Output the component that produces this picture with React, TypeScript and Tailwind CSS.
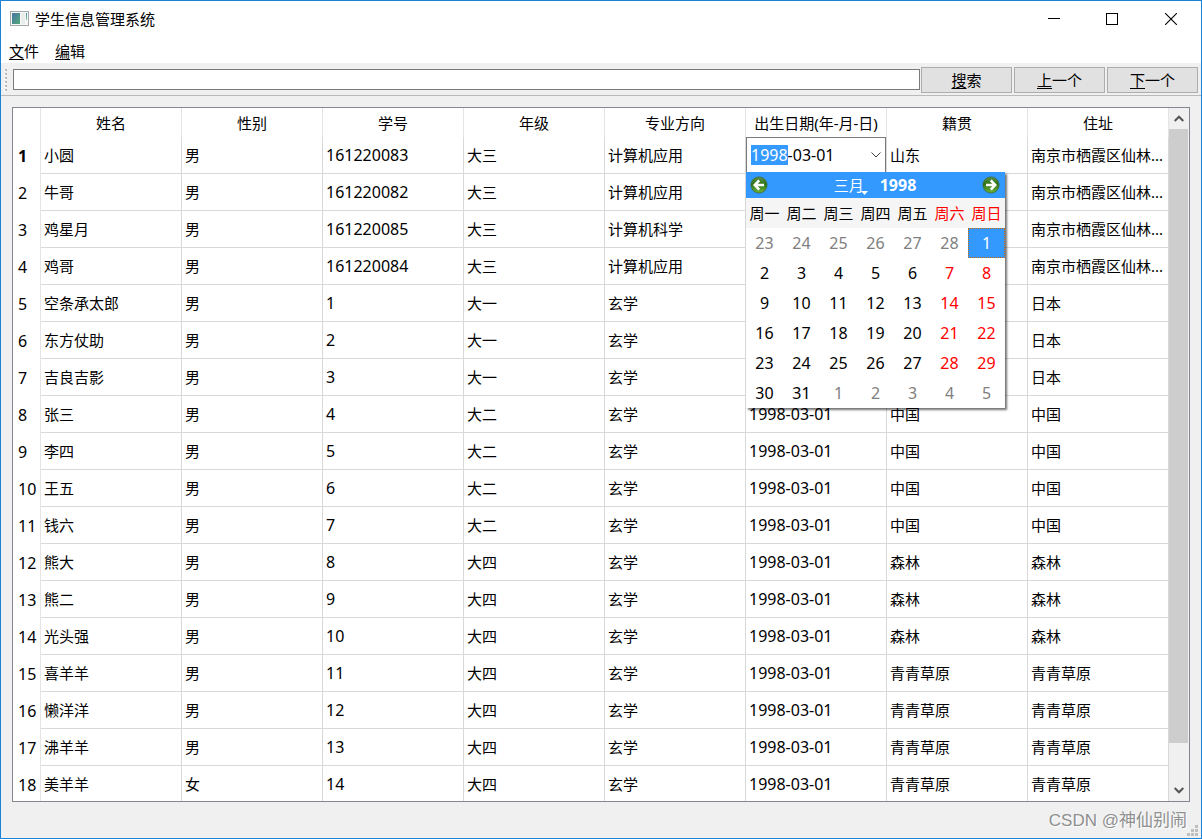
import { useEffect, useRef } from "react";
import clsx from "clsx";

type Student = [string, string, string, string, string, string, string, string];

const COLUMNS = ["姓名", "性别", "学号", "年级", "专业方向", "出生日期(年-月-日)", "籍贯", "住址"];

const BIRTHDAY = "1998-03-01";

const STUDENTS: Student[] = [
  ["小圆", "男", "161220083", "大三", "计算机应用", BIRTHDAY, "山东", "南京市栖霞区仙林..."],
  ["牛哥", "男", "161220082", "大三", "计算机应用", "", "", "南京市栖霞区仙林..."],
  ["鸡星月", "男", "161220085", "大三", "计算机科学", "", "", "南京市栖霞区仙林..."],
  ["鸡哥", "男", "161220084", "大三", "计算机应用", "", "", "南京市栖霞区仙林..."],
  ["空条承太郎", "男", "1", "大一", "玄学", "", "", "日本"],
  ["东方仗助", "男", "2", "大一", "玄学", "", "", "日本"],
  ["吉良吉影", "男", "3", "大一", "玄学", "", "", "日本"],
  ["张三", "男", "4", "大二", "玄学", BIRTHDAY, "中国", "中国"],
  ["李四", "男", "5", "大二", "玄学", BIRTHDAY, "中国", "中国"],
  ["王五", "男", "6", "大二", "玄学", BIRTHDAY, "中国", "中国"],
  ["钱六", "男", "7", "大二", "玄学", BIRTHDAY, "中国", "中国"],
  ["熊大", "男", "8", "大四", "玄学", BIRTHDAY, "森林", "森林"],
  ["熊二", "男", "9", "大四", "玄学", BIRTHDAY, "森林", "森林"],
  ["光头强", "男", "10", "大四", "玄学", BIRTHDAY, "森林", "森林"],
  ["喜羊羊", "男", "11", "大四", "玄学", BIRTHDAY, "青青草原", "青青草原"],
  ["懒洋洋", "男", "12", "大四", "玄学", BIRTHDAY, "青青草原", "青青草原"],
  ["沸羊羊", "男", "13", "大四", "玄学", BIRTHDAY, "青青草原", "青青草原"],
  ["美羊羊", "女", "14", "大四", "玄学", BIRTHDAY, "青青草原", "青青草原"],
];

const WEEKDAYS = ["周一", "周二", "周三", "周四", "周五", "周六", "周日"];

const WEEKS = [
  [23, 24, 25, 26, 27, 28, 1],
  [2, 3, 4, 5, 6, 7, 8],
  [9, 10, 11, 12, 13, 14, 15],
  [16, 17, 18, 19, 20, 21, 22],
  [23, 24, 25, 26, 27, 28, 29],
  [30, 31, 1, 2, 3, 4, 5],
];

function TitleBar() {
  return (
    <header className="flex h-9 shrink-0 items-center bg-white pl-2">
      <svg width="20" height="16" viewBox="0 0 20 16" className="ml-px" aria-hidden="true">
        <defs>
          <linearGradient id="pane" x1="0" y1="0" x2="1" y2="1">
            <stop offset="0" stopColor="#4676a4" />
            <stop offset="1" stopColor="#54a77c" />
          </linearGradient>
          <linearGradient id="strip" x1="0" y1="0" x2="0" y2="1">
            <stop offset="0" stopColor="#4a86a8" />
            <stop offset="1" stopColor="#8cc7a4" />
          </linearGradient>
        </defs>
        <rect x="0.5" y="0.5" width="18" height="14" fill="#f6f7f7" stroke="#a3a9ab" />
        <rect x="2" y="2" width="8" height="11" fill="url(#pane)" />
        <rect x="11" y="2" width="4" height="11" fill="#e9edec" />
        <rect x="16" y="2" width="1" height="7" fill="url(#strip)" />
      </svg>
      <h1 className="ml-[5px] flex-1 text-[15px]">学生信息管理系统</h1>
      <div className="flex h-full">
        <button type="button" aria-label="最小化" className="flex w-[58px] items-center justify-center">
          <svg width="12" height="12" shapeRendering="crispEdges">
            <path d="M0 5.5h12" stroke="#000" />
          </svg>
        </button>
        <button type="button" aria-label="最大化" className="flex w-[58px] items-center justify-center">
          <svg width="12" height="12" shapeRendering="crispEdges">
            <rect x="0.5" y="0.5" width="11" height="11" fill="none" stroke="#000" />
          </svg>
        </button>
        <button type="button" aria-label="关闭" className="flex w-[60px] items-center justify-center">
          <svg width="12" height="12">
            <path d="M0 0l12 12M12 0L0 12" stroke="#000" strokeWidth="1.1" />
          </svg>
        </button>
      </div>
    </header>
  );
}

function MenuBar() {
  return (
    <nav className="flex h-[27px] shrink-0 items-center gap-4 border-b border-[#f0f0f0] bg-white px-2 pt-0.5">
      <button type="button">
        <u className="underline-offset-2">文</u>件
      </button>
      <button type="button">
        <u className="underline-offset-2">编</u>辑
      </button>
    </nav>
  );
}

function ToolButton({ hotkey, rest }: { hotkey: string; rest: string }) {
  return (
    <button type="button" className="h-[26px] w-[91px] border border-[#adadad] bg-[#e1e1e1]">
      <u className="underline-offset-2">{hotkey}</u>
      {rest}
    </button>
  );
}

function ToolBar() {
  return (
    <div className="flex h-8 shrink-0 items-center border-b border-[#b9b9b9] px-[3px]">
      <svg width="9" height="24" shapeRendering="crispEdges" aria-hidden="true">
        {[1, 5, 9, 13, 17, 21].map((y) => (
          <g key={y}>
            <rect x="0" y={y + 1} width="2" height="2" fill="#fff" />
            <rect x="1" y={y} width="2" height="2" fill="#bababa" />
          </g>
        ))}
      </svg>
      <input
        type="text"
        aria-label="搜索内容"
        className="mr-px h-[21px] min-w-0 flex-1 border border-[#7a7a7a] bg-white px-1 outline-none"
      />
      <div className="flex gap-0.5">
        <ToolButton hotkey="搜" rest="索" />
        <ToolButton hotkey="上" rest="一个" />
        <ToolButton hotkey="下" rest="一个" />
      </div>
    </div>
  );
}

function MonthArrow({ label, flip }: { label: string; flip?: boolean }) {
  return (
    <button type="button" aria-label={label}>
      <svg width="18" height="18" viewBox="0 0 18 18" className={clsx("block", flip && "-scale-x-100")}>
        <defs>
          <linearGradient id="arrow" x1="0" y1="0" x2="0" y2="1">
            <stop offset="0" stopColor="#5d8f4a" />
            <stop offset="0.45" stopColor="#2f7415" />
            <stop offset="1" stopColor="#6fb53a" />
          </linearGradient>
        </defs>
        <circle cx="9" cy="9" r="8.1" fill="url(#arrow)" stroke="#3c6b3a" strokeWidth="0.8" />
        <path d="M9.2 4.4L4.8 9l4.4 4.6M5 9h9" fill="none" stroke="#fff" strokeWidth="2.6" />
      </svg>
    </button>
  );
}

function Calendar() {
  return (
    <div className="absolute top-[35px] left-0 z-10 w-[259px] bg-white shadow-[2px_2px_2px_rgba(0,0,0,0.55)]">
      <div className="flex h-[26px] items-center justify-between bg-[#3399ff] pr-[5px] pl-1 font-bold text-white">
        <MonthArrow label="上个月" />
        <div className="flex items-center gap-4">
          <button type="button" className="relative font-normal">
            三月
            <svg width="7" height="4" className="absolute -right-1 bottom-0" aria-hidden="true">
              <path d="M0 0h7L3.5 4z" fill="#fff" />
            </svg>
          </button>
          <button type="button" className="text-base leading-5">1998</button>
        </div>
        <MonthArrow label="下个月" flip />
      </div>
      <table className="w-full table-fixed border-separate border-spacing-0">
        <thead>
          <tr className="bg-[#f5f5f5]">
            {WEEKDAYS.map((name, i) => (
              <th key={name} className={clsx("h-[30px] p-0 font-normal", i > 4 && "text-[#ff0000]")}>
                {name}
              </th>
            ))}
          </tr>
        </thead>
        <tbody>
          {WEEKS.map((week, w) => (
            <tr key={w}>
              {week.map((day, d) => {
                const selected = w === 0 && d === 6;
                const outside = (w === 0 && day > 7) || (w === 5 && day < 7);
                return (
                  <td key={d} className="h-[30px] p-0">
                    <button
                      type="button"
                      className={clsx(
                        "block h-[30px] w-full text-base",
                        selected && "border border-dotted border-[#cc6600] bg-[#3399ff] text-white",
                        outside && "text-[#808080]",
                        !selected && !outside && d > 4 && "text-[#ff0000]"
                      )}
                    >
                      {day}
                    </button>
                  </td>
                );
              })}
            </tr>
          ))}
        </tbody>
      </table>
    </div>
  );
}

function DateEditor({ value }: { value: string }) {
  const input = useRef<HTMLInputElement>(null);

  // the year section is the active one
  useEffect(() => {
    input.current?.focus();
    input.current?.setSelectionRange(0, 4);
  }, []);

  return (
    <div className="relative">
      <div className="flex h-9 items-center border border-[#7a7a7a] bg-white px-1">
        <input
          ref={input}
          type="text"
          aria-label="出生日期"
          defaultValue={value}
          className="h-5 min-w-0 flex-1 text-base leading-5 outline-none selection:bg-[#3399ff]/99 selection:text-white"
        />
        <button type="button" aria-label="打开日历">
          <svg width="10" height="6" viewBox="0 0 10 6" className="block">
            <path d="M0.5 0.5L5 5l4.5-4.5" fill="none" stroke="#444" />
          </svg>
        </button>
      </div>
      <Calendar />
    </div>
  );
}

function StudentTable() {
  return (
    <table className="w-full table-fixed border-separate border-spacing-0">
      <colgroup>
        <col className="w-7" />
        {COLUMNS.map((name) => (
          <col key={name} />
        ))}
      </colgroup>
      <thead>
        <tr>
          <th className="h-[29px] border-r border-[#e5e5e5] p-0" />
          {COLUMNS.map((name) => (
            <th key={name} className="h-[29px] border-r border-[#e5e5e5] p-0 font-normal whitespace-nowrap">
              {name}
            </th>
          ))}
        </tr>
      </thead>
      <tbody>
        {STUDENTS.map((student, row) => (
          <tr key={row}>
            <th
              className={clsx(
                "h-[37px] border-r border-[#e5e5e5] p-0 pl-[5px] text-left text-base leading-5",
                row === 0 ? "font-bold" : "font-normal"
              )}
            >
              {row + 1}
            </th>
            {student.map((value, col) =>
              row === 0 && col === 5 ? (
                <td key={col} className="h-[37px] border-r border-b border-[#d8d8d8] p-0">
                  <DateEditor value={value} />
                </td>
              ) : (
                <td
                  key={col}
                  className={clsx(
                    "h-[37px] border-r border-b border-[#d8d8d8] px-[3px] py-0 whitespace-nowrap",
                    (col === 2 || col === 5) && "text-base leading-5"
                  )}
                >
                  {value}
                </td>
              )
            )}
          </tr>
        ))}
      </tbody>
    </table>
  );
}

function ScrollBar() {
  return (
    <div className="flex w-5 shrink-0 flex-col bg-[#f0f0f0]">
      <button type="button" aria-label="向上滚动" className="flex h-[21px] items-center justify-center">
        <svg width="10" height="7">
          <path d="M0.7 6L5 1.7 9.3 6" fill="none" stroke="#555" strokeWidth="2" />
        </svg>
      </button>
      <div className="flex flex-1 flex-col">
        <div className="mr-px flex-[614] bg-[#cdcdcd]" />
        <div className="flex-[37]" />
      </div>
      <button type="button" aria-label="向下滚动" className="flex h-[21px] items-center justify-center">
        <svg width="10" height="7">
          <path d="M0.7 1L5 5.3 9.3 1" fill="none" stroke="#555" strokeWidth="2" />
        </svg>
      </button>
    </div>
  );
}

function StatusBar() {
  return (
    <footer className="flex h-9 shrink-0 items-center justify-end pt-0.5 pr-[3px]">
      <span className="font-['Liberation_Sans','Noto_Sans_CJK_SC',sans-serif] text-[17px] text-[#8f8f8f] [text-shadow:1px_1px_1px_#fff]">
        CSDN @神仙别闹
      </span>
      <svg width="11" height="11" className="mb-0.5 self-end" shapeRendering="crispEdges" aria-hidden="true">
        <g fill="#bfbfbf">
          <rect x="8" y="0" width="3" height="3" />
          <rect x="4" y="4" width="3" height="3" />
          <rect x="8" y="4" width="3" height="3" />
          <rect x="0" y="8" width="3" height="3" />
          <rect x="4" y="8" width="3" height="3" />
          <rect x="8" y="8" width="3" height="3" />
        </g>
      </svg>
    </footer>
  );
}

export default function App() {
  return (
    <div className="flex h-screen flex-col border border-[#1883d7] bg-[#f0f0f0] font-['Noto_Sans','Noto_Sans_CJK_SC',sans-serif] text-[15px] leading-5 text-black">
      <TitleBar />
      <MenuBar />
      <ToolBar />
      <main className="flex min-h-0 flex-1 px-[11px] pt-[11px]">
        <div className="flex min-w-0 flex-1 overflow-hidden border border-[#828790] bg-white">
          <div className="min-w-0 flex-1 overflow-hidden">
            <StudentTable />
          </div>
          <ScrollBar />
        </div>
      </main>
      <StatusBar />
    </div>
  );
}
